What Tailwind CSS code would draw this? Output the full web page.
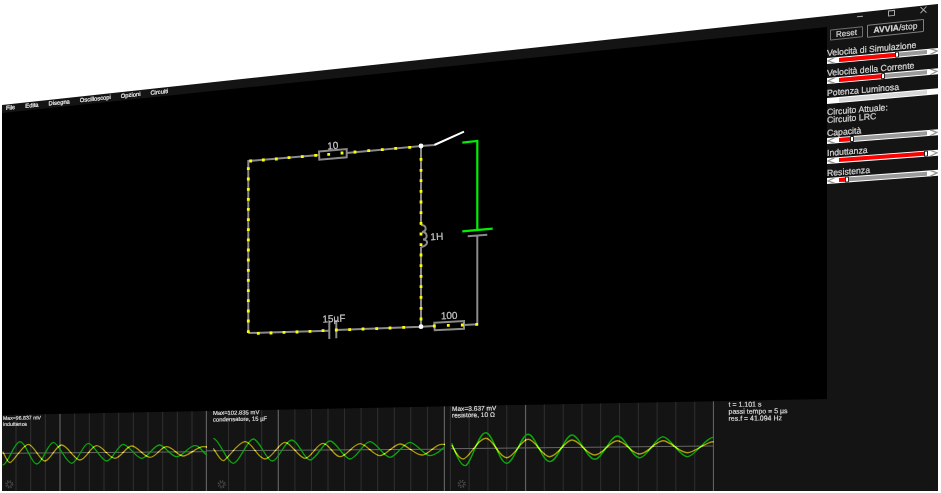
<!DOCTYPE html>
<html lang="it">
<head>
<meta charset="utf-8">
<title>Circuito LRC</title>
<script src="https://cdn.jsdelivr.net/npm/@tailwindcss/browser@4"></script>
</head>
<body class="w-[941px] h-[493px] overflow-hidden bg-white [font-family:'Liberation_Sans',sans-serif]">
<div class="ml-[2px] w-[936px] h-[491px] [clip-path:polygon(0_105px,936px_4px,936px_491px,0_491px)] bg-[#141414]">
<div class="flex w-full h-full blur-[0.5px]">

  <!-- LEFT COLUMN -->
  <div class="relative w-[825px] h-full flex flex-col">
    <div class="h-[27px] shrink-0"></div>

    <!-- canvas -->
    <div class="relative z-10 h-[388px] -mb-[16px] shrink-0 bg-black [clip-path:polygon(0_86px,825px_0,825px_372px,0_388px)]">
      <svg width="825" height="388" viewBox="2 27 825 388" class="block" fill="none">
        <g stroke="#8a8a8a" stroke-width="2">
          <path d="M248.300 331.700V161L319 155M346.700 153L421 146V225M421 246.700V326.700L336.300 330M329.300 330.700L248.300 333"/>
          <path d="M421 146L434.300 145"/>
          <path d="M319 151.400L346.700 149V157.300L319.300 159.700Z"/>
          <path d="M329.300 321.700V339M336.300 320V338.300"/>
          <path d="M421 326.700L434.300 326M464 325L477.300 324.300V235M467.700 236.300L487.300 234.700"/>
          <path d="M434.300 322.700L464 321V328.700L434.700 330.300Z"/>
          <path d="M421 225c5.500 0 6.500 6 1 7c5.500 0 6.500 7 1 7.500c5.500 0 6 6 -2 7.500"/>
        </g>
        <path d="M434.300 145L464 131.700" stroke="#fff" stroke-width="2"/>
        <path d="M462.300 142.700L477.300 141V230M462.300 231.300L492.700 228.700" stroke="#00f000" stroke-width="2.200"/>
        <path stroke="#ffff00" stroke-width="2.800" stroke-linecap="square" d="
          M250.700 161h0M263.300 160h0M276.300 159h0M289 157.700h0M302.300 156.700h0M315.700 155.300h0M328.700 154.300h0M342 153h0M355 152h0M368.700 150.700h0M382.300 149.700h0M395.700 148.300h0M409.700 147.300h0
          M248.300 168.700h0M248.300 179h0M248.300 189.300h0M248.300 199.300h0M248.300 209.300h0M248.300 219.700h0M248.300 229.700h0M248.300 239.800h0M248.300 250h0M248.300 260h0M248.300 270.300h0M248.300 280.300h0M248.300 290.700h0M248.300 300.700h0M248.300 311h0M248.300 321h0M248.300 331.700h0
          M421 159.300h0M421 170.300h0M421 180.700h0M421 191.300h0M421 202h0M421 212.700h0M421 223.300h0M421 234h0M421 244.700h0M421 255h0M421 265.700h0M421 276.300h0M421 286.700h0M421 297.300h0M421 308.300h0M421 319h0
          M258.300 333.300h0M271 333h0M284 332.300h0M297 332h0M310 331.300h0M323 330.700h0M336.300 330h0M349.700 329.700h0M363 329h0M376.700 328.700h0M390 328h0M403.700 327.300h0M434.300 326h0M448.300 325.300h0M462.300 325h0M476.700 324.300h0"/>
        <circle cx="421" cy="146" r="2.400" fill="#fff"/>
        <circle cx="421" cy="326.700" r="2.400" fill="#fff"/>
        <g fill="#c8c8c8" stroke="#c8c8c8" stroke-width="0.200" font-size="10" text-anchor="middle">
          <text x="333" y="149" transform="rotate(-4 333 149)">10</text>
          <text x="437" y="240" transform="rotate(-3 437 240)">1H</text>
          <text x="449.300" y="319" transform="rotate(-2 449 319)">100</text>
          <text x="334" y="322" transform="rotate(-2 334 322)">15µF</text>
        </g>
      </svg>
    </div>

    <!-- oscilloscopes -->
    <div class="flex h-[92px] shrink-0">
      <svg width="205" height="92" viewBox="2 399 205 92" class="block shrink-0" fill="none">
        <path stroke="#303030" d="M16 399V491M30.700 399V491M45.300 399V491M74.700 399V491M89.300 399V491M104 399V491M118.700 399V491M133.300 399V491M148 399V491M162.700 399V491M177.300 399V491M192 399V491"/>
        <path stroke="#606060" stroke-width="1.200" d="M60 399V491M206.400 399V491"/>
        <path stroke="#666" d="M2 453.300L207 451.700"/>
        <path stroke="#0ca40c" stroke-width="1.300" d="M2.700 465C8 465 14 441.700 20 441.700S31 464 36.700 464S48 442.300 53.300 442.300S66 463.300 71.700 463.300S83 443.300 88.300 443.300S101 461 106.700 461S118 444.300 123.300 444.300S136 458.300 141.700 458.300S154 445 159.300 445S171 456.700 176.700 456.700S189 445.700 195 445.700S203 454 207 454.500"/>
        <path class="mix-blend-plus-lighter" stroke="#a89a08" stroke-width="1.300" d="M2.700 451.700C5 455 7 462.700 10 462.700S23 444.300 28.300 444.300S40 461 45 461S56 445 61.700 445S74 460 80 460S91 445.700 96.700 445.700S109 458.300 115 458.300S126 446 131.700 446S144 457.300 150 457.300S161 446.700 166.700 446.700S178 456 183.300 456S197 446.700 203.300 446.700S206 447 207 447.500"/>
        <g fill="#e4e4e4" stroke="#e4e4e4" stroke-width="0.120">
          <text x="3" y="420" font-size="5.200" transform="rotate(-1 3 420)">Max=96.837 mV</text>
          <text x="3" y="426" font-size="5.200" transform="rotate(-1 3 426)">induttanza</text>
        </g>
        <g stroke="#4c4c4c"><circle cx="9.300" cy="484.300" r="2.100" stroke-width="0.800"/><circle cx="9.300" cy="484.300" r="3.400" stroke-width="1.400" stroke-dasharray="1.300 1.370"/></g>
      </svg>
      <svg width="238" height="92" viewBox="207 399 238 92" class="block shrink-0" fill="none">
        <path stroke="#303030" d="M228.600 399V491M245.100 399V491M261.700 399V491M294.900 399V491M311.400 399V491M328 399V491M344.600 399V491M361.100 399V491M377.700 399V491M394.300 399V491M410.800 399V491M427.400 399V491"/>
        <path stroke="#606060" stroke-width="1.200" d="M278.300 399V491M444.400 399V491"/>
        <path stroke="#666" d="M207 450.800L445 449.200"/>
        <path stroke="#0ca40c" stroke-width="1.300" d="M213.300 438.300C219 438.300 227 463.300 233.300 463.300S247 439 253.300 439S266 461 272.300 461S285 440 291.700 440S304 460 310 460S324 441 330 441S344 459 350 459S364 441.700 370 441.700S384 457.300 390 457.300S404 442.300 410 442.300S424 455.700 430 455.700S442 449 445 446.700"/>
        <path class="mix-blend-plus-lighter" stroke="#a89a08" stroke-width="1.300" d="M213.300 448.300C216 452 220 460.700 223.300 460.700S238 441.700 245 441.700S258 459 265 459S279 442.300 285 442.300S299 458.300 305 458.300S317 443.300 323 443.300S334 456.700 340 456.700S354 443.700 360 443.700S374 455.700 380 455.700S394 444 400 444S415 455 421.700 455S435 444.300 441.700 444.300S444 444.500 445 444.700"/>
        <g fill="#e4e4e4" stroke="#e4e4e4" stroke-width="0.120">
          <text x="213" y="415" font-size="5.900" transform="rotate(-1 213 415)">Max=102.835 mV</text>
          <text x="213" y="421.500" font-size="5.900" transform="rotate(-1 213 421)">condensatore, 15 µF</text>
        </g>
        <g stroke="#4c4c4c"><circle cx="221.700" cy="484.300" r="2.100" stroke-width="0.800"/><circle cx="221.700" cy="484.300" r="3.400" stroke-width="1.400" stroke-dasharray="1.300 1.370"/></g>
      </svg>
      <svg width="269" height="92" viewBox="445 399 269.500 92" class="block shrink-0" fill="none">
        <path stroke="#303030" d="M450.400 399V491M469.200 399V491M488 399V491M506.900 399V491M544.500 399V491M563.400 399V491M582.200 399V491M601 399V491M619.900 399V491M638.700 399V491M657.500 399V491M676.300 399V491M695.200 399V491"/>
        <path stroke="#606060" stroke-width="1.200" d="M525.700 399V491M714 399V491"/>
        <path stroke="#666" d="M451 448.700L714 446"/>
        <path stroke="#0ca40c" stroke-width="1.400" d="M451.700 443.300C454 448 459 465.700 465 465.700S478 432.700 485.700 432.700S499 463.300 506.700 463.300S521 434.300 528.300 434.300S542 461.700 550 461.700S565 435 572.300 435S587 459.300 595 459.300S610 436 617.700 436S632 457.700 640 457.700S656 436.700 663.300 436.700S680 456.700 687.700 456.700S706 437.300 714 437.300"/>
        <path class="mix-blend-plus-lighter" stroke="#a89a08" stroke-width="1.400" d="M451.700 445C454 449 458 459 463.300 459S478 438.300 485.700 438.300S499 457.700 506.700 457.700S521 439.300 528.300 439.300S542 456.700 550 456.700S565 440 572.300 440S587 455 595 455S610 440.700 617.700 440.700S632 454 640 454S656 440.700 663.300 440.700S680 452.700 687.700 452.700S706 441.700 714 441.700"/>
        <g fill="#e4e4e4" stroke="#e4e4e4" stroke-width="0.120">
          <text x="452" y="411" font-size="6.600" transform="rotate(-1 452 411)">Max=3.637 mV</text>
          <text x="452" y="417.500" font-size="6.600" transform="rotate(-1 452 417)">resistore, 10 Ω</text>
        </g>
        <g stroke="#4c4c4c"><circle cx="461.700" cy="484" r="2.100" stroke-width="0.800"/><circle cx="461.700" cy="484" r="3.400" stroke-width="1.400" stroke-dasharray="1.300 1.370"/></g>
      </svg>
      <div class="flex-1 pl-[14.500px] pt-[3px] text-[7px] leading-[6.800px] text-[#e4e4e4] [-webkit-text-stroke:0.12px_#e4e4e4] origin-left -skew-y-[0.600deg]">
        <p>t = 1.101 s</p>
        <p>passi tempo = 5 µs</p>
        <p>res.f = 41.094 Hz</p>
      </div>
    </div>

    <!-- menu bar -->
    <nav class="absolute z-20 left-[4px] top-[104px] h-[8px] flex items-center gap-[10px] text-[5.800px] leading-[8px] text-[#f0f0f0] [-webkit-text-stroke:0.2px_#f0f0f0] origin-left -skew-y-[6deg]">
      <span>File</span><span>Edita</span><span>Disegna</span><span>Oscilloscopi</span><span>Opzioni</span><span>Circuiti</span>
    </nav>
  </div>

  <!-- SIDEBAR -->
  <aside class="w-[111px] shrink-0 flex flex-col pt-[14px] text-[8.700px] leading-[10px] text-[#d6d6d6] [-webkit-text-stroke:0.2px_#d6d6d6]">
    <!-- window controls -->
    <div class="h-[12px] flex items-center pl-[30px] gap-[25px] origin-left -skew-y-[6deg]">
      <svg width="6" height="8" viewBox="0 0 6 8" class="shrink-0"><path d="M0 4H6" stroke="#a8a8a8"/></svg>
      <svg width="7" height="8" viewBox="0 0 7 8" class="shrink-0"><rect x=".5" y="1.500" width="6" height="5" fill="none" stroke="#a8a8a8"/></svg>
      <svg width="7" height="8" viewBox="0 0 7 8" class="shrink-0"><path d="M.5 1L6.500 7M6.500 1L.5 7" stroke="#a8a8a8"/></svg>
    </div>
    <!-- buttons -->
    <div class="mt-[3px] h-[13px] flex items-center pl-[3px] gap-[4px] origin-left -skew-y-[6deg]">
      <button class="w-[33px] h-[11px] border border-[#707070] rounded-[1px] text-[8px] leading-[9px] text-[#d8d8d8]">Reset</button>
      <button class="w-[57px] h-[13px] border border-[#808080] rounded-[1px] text-[8.500px] leading-[11px] text-[#d8d8d8]"><b class="font-bold">AVVIA</b>/stop</button>
    </div>

    <div class="mt-[5.500px] h-[16px] origin-left -skew-y-[5.200deg]">
      <p class="h-[10px] whitespace-nowrap">Velocità di Simulazione</p>
      <div class="h-[6px] flex items-center bg-white">
        <svg width="12" height="6" viewBox="0 0 12 6" class="shrink-0"><path d="M8 0L1 3L8 6" fill="none" stroke="#999" stroke-width="1.300"/></svg>
        <div class="relative flex-1 h-[3.500px] bg-[#9a9a9a]"><div class="h-full w-[58px] bg-[#f00]"></div><div class="absolute left-[56px] -top-[1.500px] w-[4px] h-[6.500px] bg-white border border-[#222] rounded-[1px]"></div></div>
        <svg width="11" height="6" viewBox="0 0 11 6" class="shrink-0"><path d="M3 0L10 3L3 6" fill="none" stroke="#999" stroke-width="1.300"/></svg>
      </div>
    </div>
    <div class="mt-[4px] h-[16px] origin-left -skew-y-[5deg]">
      <p class="h-[10px] whitespace-nowrap">Velocità della Corrente</p>
      <div class="h-[6px] flex items-center bg-white">
        <svg width="12" height="6" viewBox="0 0 12 6" class="shrink-0"><path d="M8 0L1 3L8 6" fill="none" stroke="#999" stroke-width="1.300"/></svg>
        <div class="relative flex-1 h-[3.500px] bg-[#9a9a9a]"><div class="h-full w-[44px] bg-[#f00]"></div><div class="absolute left-[42px] -top-[1.500px] w-[4px] h-[6.500px] bg-white border border-[#222] rounded-[1px]"></div></div>
        <svg width="11" height="6" viewBox="0 0 11 6" class="shrink-0"><path d="M3 0L10 3L3 6" fill="none" stroke="#999" stroke-width="1.300"/></svg>
      </div>
    </div>
    <div class="mt-[4.500px] h-[16px] origin-left -skew-y-[5deg]">
      <p class="h-[10px] whitespace-nowrap">Potenza Luminosa</p>
      <div class="h-[6px] flex items-center bg-white">
        <svg width="12" height="6" viewBox="0 0 12 6" class="shrink-0"></svg>
        <div class="flex-1 h-[3.500px] bg-[#d8d8d8]"></div>
        <svg width="11" height="6" viewBox="0 0 11 6" class="shrink-0"></svg>
      </div>
    </div>

    <div class="mt-[5px] h-[16px] leading-[7.500px] origin-left -skew-y-[4.500deg]">
      <p class="whitespace-nowrap">Circuito Attuale:</p>
      <p class="whitespace-nowrap">Circuito LRC</p>
    </div>

    <div class="mt-[2.500px] h-[16px] origin-left -skew-y-[4.500deg]">
      <p class="h-[10px] whitespace-nowrap">Capacità</p>
      <div class="h-[6px] flex items-center bg-white">
        <svg width="12" height="6" viewBox="0 0 12 6" class="shrink-0"><path d="M8 0L1 3L8 6" fill="none" stroke="#999" stroke-width="1.300"/></svg>
        <div class="relative flex-1 h-[3.500px] bg-[#9a9a9a]"><div class="h-full w-[13px] bg-[#f00]"></div><div class="absolute left-[11px] -top-[1.500px] w-[4px] h-[6.500px] bg-white border border-[#222] rounded-[1px]"></div></div>
        <svg width="11" height="6" viewBox="0 0 11 6" class="shrink-0"><path d="M3 0L10 3L3 6" fill="none" stroke="#999" stroke-width="1.300"/></svg>
      </div>
    </div>
    <div class="mt-[4px] h-[16px] origin-left -skew-y-[4.300deg]">
      <p class="h-[10px] whitespace-nowrap">Induttanza</p>
      <div class="h-[6px] flex items-center bg-white">
        <svg width="12" height="6" viewBox="0 0 12 6" class="shrink-0"><path d="M8 0L1 3L8 6" fill="none" stroke="#999" stroke-width="1.300"/></svg>
        <div class="relative flex-1 h-[3.500px] bg-[#9a9a9a]"><div class="h-full w-[88px] bg-[#f00]"></div><div class="absolute left-[85px] -top-[1.500px] w-[4px] h-[6.500px] bg-white border border-[#222] rounded-[1px]"></div></div>
        <svg width="11" height="6" viewBox="0 0 11 6" class="shrink-0"><path d="M3 0L10 3L3 6" fill="none" stroke="#999" stroke-width="1.300"/></svg>
      </div>
    </div>
    <div class="mt-[4px] h-[16px] origin-left -skew-y-[4.200deg]">
      <p class="h-[10px] whitespace-nowrap">Resistenza</p>
      <div class="h-[6px] flex items-center bg-white">
        <svg width="12" height="6" viewBox="0 0 12 6" class="shrink-0"><path d="M8 0L1 3L8 6" fill="none" stroke="#999" stroke-width="1.300"/></svg>
        <div class="relative flex-1 h-[3.500px] bg-[#9a9a9a]"><div class="h-full w-[8px] bg-[#f00]"></div><div class="absolute left-[6px] -top-[1.500px] w-[4px] h-[6.500px] bg-white border border-[#222] rounded-[1px]"></div></div>
        <svg width="11" height="6" viewBox="0 0 11 6" class="shrink-0"><path d="M3 0L10 3L3 6" fill="none" stroke="#999" stroke-width="1.300"/></svg>
      </div>
    </div>
  </aside>
</div>
</div>
</body>
</html>
